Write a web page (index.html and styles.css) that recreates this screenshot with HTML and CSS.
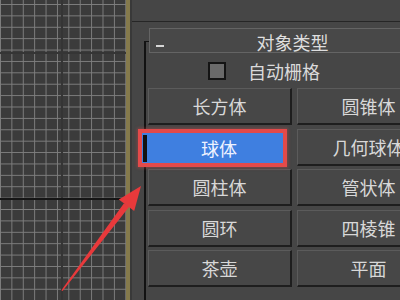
FILE: index.html
```html
<!DOCTYPE html>
<html>
<head>
<meta charset="utf-8">
<link rel="stylesheet" href="styles.css">
</head>
<body>
<div class="screen">
  <div class="viewport"></div>
  <div class="panel">
    <div class="topbar"></div>
    <div class="rollout">
      <div class="rhead"><span class="minus"></span><span class="title">对象类型</span><span></span></div>
      <div class="autogrid"><span class="check"></span><span class="label">自动栅格</span></div>
      <div class="btns">
        <div class="btn">长方体</div>
        <div class="btn">圆锥体</div>
        <div class="btn sel">球体</div>
        <div class="btn">几何球体</div>
        <div class="btn">圆柱体</div>
        <div class="btn">管状体</div>
        <div class="btn">圆环</div>
        <div class="btn">四棱锥</div>
        <div class="btn">茶壶</div>
        <div class="btn">平面</div>
      </div>
    </div>
  </div>
  <svg class="arrow" width="400" height="300" viewBox="0 0 400 300">
    <polygon points="61.4,290.2 62.6,291 129,207 124,203.2" fill="#e8393b"/>
    <polygon points="141,186 134.2,211 118.8,199.4" fill="#e8393b"/>
  </svg>
</div>
</body>
</html>
```
FILE: styles.css
```css
html, body {
  margin: 0;
  padding: 0;
  background: #464646;
}
.screen {
  position: relative;
  width: 400px;
  height: 300px;
  display: flex;
  overflow: hidden;
  font-family: "Noto Sans CJK SC", "Noto Sans", sans-serif;
}
.viewport {
  width: 126px;
  height: 300px;
  flex: none;
  border-right: 4px solid #857a4c;
  background:
    linear-gradient(#161616, #161616) 0 198px / 100% 2px no-repeat,
    linear-gradient(#353535, #353535) 61px 0 / 2px 100% no-repeat,
    linear-gradient(#353535, #353535) 0 52px / 100% 2px no-repeat,
    linear-gradient(90deg, #7e7e7e 1px, transparent 1px) 0 0 / 11.4px 11.4px,
    linear-gradient(#7e7e7e 1px, transparent 1px) 0 4px / 11.4px 11.4px,
    #3b3b3b;
}
.panel {
  flex: 1;
  min-width: 0;
  height: 300px;
  background: #464646;
  border-left: 2px solid #393939;
  overflow: hidden;
}
.topbar {
  height: 21px;
  border-bottom: 1px solid #262626;
}
.rollout {
  position: relative;
  margin: 6px 0 0 12px;
  width: 292px;
  height: 300px;
}
.rollout::before {
  content: "";
  position: absolute;
  left: 0;
  top: 13px;
  bottom: 0;
  width: 5px;
  border-top: 1px solid #121212;
  border-left: 2px solid #121212;
}
.rhead {
  position: relative;
  margin-left: 5px;
  height: 25px;
  box-sizing: border-box;
  border: 1px solid #646464;
  background: #484848;
  display: grid;
  grid-template-columns: 1fr auto 1fr;
  align-items: end;
}
.minus {
  justify-self: start;
  margin: 0 0 5px 6px;
  width: 8px;
  height: 2px;
  background: #d6d6d6;
}
.title {
  font-size: 18px;
  line-height: 20px;
  color: #dedede;
}
.autogrid {
  height: 35px;
  display: flex;
  align-items: center;
  padding-left: 64px;
}
.check {
  width: 18px;
  height: 18px;
  box-sizing: border-box;
  border: 2px solid #141414;
  background: #6a6a6a;
}
.label {
  margin-left: 22px;
  font-size: 18px;
  color: #dadada;
}
.btns {
  display: grid;
  grid-template-columns: 144px 144px;
  grid-auto-rows: 37px;
  column-gap: 5px;
  row-gap: 3.5px;
  margin-left: 4px;
}
.btn {
  box-sizing: border-box;
  border-top: 1px solid #5b5b5b;
  border-left: 1px solid #5b5b5b;
  border-right: 2px solid #1e1e1e;
  border-bottom: 2px solid #1e1e1e;
  background: #474747;
  display: flex;
  align-items: center;
  justify-content: center;
  font-size: 18px;
  color: #d8d8d8;
  white-space: nowrap;
}
.btn.sel {
  position: relative;
  border: none;
  margin: 4.5px 9px 2.5px -6px;
  padding-left: 13px;
  background: #3f7fe0;
  color: #eef2ff;
  box-shadow: 0 0 0 4px #e34a4a, 0 0 3px 5px rgba(227, 74, 74, 0.35);
}
.btn.sel::before {
  content: "";
  position: absolute;
  left: 1px;
  top: 2px;
  bottom: 1px;
  width: 4px;
  background: #121212;
}
.arrow {
  position: absolute;
  left: 0;
  top: 0;
  pointer-events: none;
}
```
